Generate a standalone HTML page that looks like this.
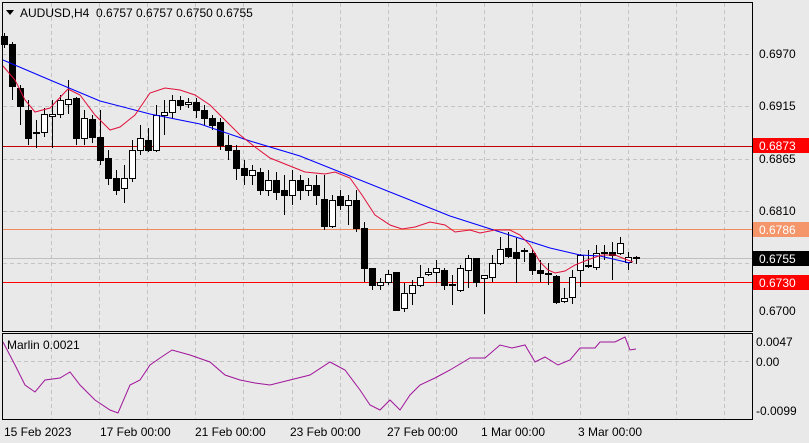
<!DOCTYPE html>
<html><head><style>
html,body{margin:0;padding:0;background:#e9e9e9;}
svg{display:block;font-family:"Liberation Sans",sans-serif;}
</style></head><body>
<svg id="s" width="809" height="443" viewBox="0 0 809 443" xmlns="http://www.w3.org/2000/svg">
<rect x="0" y="0" width="809" height="443" fill="#e9e9e9"/>
<g id="grid" stroke="#c4c4c4" stroke-dasharray="4,3" stroke-width="1"></g>
<line x1="2" y1="146.5" x2="752" y2="146.5" stroke="#c00000"/>
<line x1="2" y1="229.5" x2="752" y2="229.5" stroke="#f08a60"/>
<line x1="2" y1="258.5" x2="752" y2="258.5" stroke="#c0c0c0"/>
<line x1="2" y1="282.5" x2="752" y2="282.5" stroke="#ff0000"/>
<g id="candles"></g>
<polyline fill="none" stroke="#0000ff" stroke-width="1" points="3,60 50,80 100,101 150,114 200,124 250,141 300,156 350,176 400,196 450,216 500,232 550,248 580,255 600,256 630,263"/>
<polyline fill="none" stroke="#e0103a" stroke-width="1" points="3,66 15,80 25,100 35,112 50,108 68,89 80,95 95,115 110,130 120,127 135,115 150,93 165,88 180,90 195,95 210,105 225,120 240,135 255,147 270,158 290,166 305,172 325,174 335,172 350,178 362,195 375,215 390,225 402,229 415,227 430,222 445,225 455,232 470,230 480,233 495,230 510,230 520,235 530,245 540,262 548,270 555,273 565,271 575,265 590,259 602,255 615,255 625,259 633,262"/>
<polyline fill="none" stroke="#a0149a" stroke-width="1" points="3,342 15,365 25,385 35,392 45,380 60,378 70,372 80,385 95,400 110,410 118,413 130,385 140,380 150,365 160,358 172,350 190,355 210,362 225,375 240,380 255,383 270,385 290,380 310,375 330,362 345,370 360,390 370,405 380,410 390,400 400,410 410,395 420,385 435,378 450,370 470,358 485,358 500,345 512,348 525,345 535,362 545,357 558,365 570,360 580,348 595,348 600,342 615,342 625,337 630,350 636,349"/>
<rect x="2.5" y="2.5" width="750" height="329" fill="none" stroke="#000"/>
<rect x="2.5" y="333.5" width="750" height="86" fill="none" stroke="#000"/>
<polygon points="6,10 14,10 10,15" fill="#000"/>
<text x="20" y="17" font-size="12" fill="#000">AUDUSD,H4&#160;&#160;0.6757 0.6757 0.6750 0.6755</text>
<text x="7" y="349" font-size="12" fill="#000">Marlin 0.0021</text>
<g font-size="12" fill="#000" id="axis">
<text x="759" y="58">0.6970</text>
<text x="759" y="110">0.6915</text>
<text x="759" y="163">0.6865</text>
<text x="759" y="215">0.6810</text>
<text x="759" y="315">0.6700</text>
<text x="756" y="346">0.0047</text>
<text x="756" y="366">0.00</text>
<text x="756" y="415">-0.0099</text>
</g>
<rect x="753" y="138" width="56" height="15" fill="#ff0000"/>
<text x="759" y="150" font-size="12" fill="#fff">0.6873</text>
<rect x="753" y="222" width="56" height="15" fill="#f4956a"/>
<text x="759" y="234" font-size="12" fill="#fff">0.6786</text>
<rect x="753" y="251" width="56" height="15" fill="#000"/>
<text x="759" y="263" font-size="12" fill="#fff">0.6755</text>
<rect x="753" y="275" width="56" height="15" fill="#ff0000"/>
<text x="759" y="287" font-size="12" fill="#fff">0.6730</text>
<g font-size="12" fill="#000">
<text x="4" y="436">15 Feb 2023</text>
<text x="100" y="436">17 Feb 00:00</text>
<text x="195" y="436">21 Feb 00:00</text>
<text x="290" y="436">23 Feb 00:00</text>
<text x="387" y="436">27 Feb 00:00</text>
<text x="481" y="436">1 Mar 00:00</text>
<text x="578" y="436">3 Mar 00:00</text>
</g>
</svg>
<script>
var NS="http://www.w3.org/2000/svg";
function el(t,a,p){var e=document.createElementNS(NS,t);for(var k in a)e.setAttribute(k,a[k]);p.appendChild(e);return e;}
var g=document.getElementById('grid');
for(var i=0;i<15;i++){var x=51+48.1*i;if(x>750)break;x=Math.round(x)+.5;el('line',{x1:x,y1:3,x2:x,y2:331},g);el('line',{x1:x,y1:334,x2:x,y2:419},g);}
[54,106,159,211,263].forEach(function(y){el('line',{x1:3,y1:y+.5,x2:752,y2:y+.5},g);});
el('line',{x1:3,y1:361.5,x2:752,y2:361.5},g);
var d=[[36,44,33,48],[44,86,42,100],[88,106,85,125],[110,138,100,145],[132,133,120,148],[132,114,108,137],[116,114,100,148],[114,100,95,118],[104,99,80,114],[98,138,97,145],[138,118,110,145],[119,137,115,143],[137,160,110,165],[158,178,150,185],[178,190,170,195],[188,178,165,203],[178,150,140,182],[150,138,125,155],[140,150,128,152],[150,115,105,152],[115,112,100,135],[112,100,95,118],[100,105,96,110],[104,102,98,108],[102,110,98,118],[110,118,105,125],[118,125,115,130],[122,145,118,150],[145,150,135,160],[150,168,145,180],[168,175,160,185],[175,170,165,185],[172,190,168,195],[190,180,170,196],[180,192,172,200],[190,195,175,215],[195,180,170,205],[180,190,175,200],[190,185,178,196],[185,195,175,205],[199,226,175,230],[226,200,195,228],[196,205,190,210],[205,200,195,225],[200,228,190,232],[228,268,222,282],[268,285,268,290],[285,282,278,290],[282,274,270,285],[272,310,272,310],[308,293,283,312],[293,285,280,305],[285,277,265,287],[274,272,268,276],[272,268,260,283],[270,285,268,290],[285,284,275,305],[290,268,265,292],[270,258,255,288],[258,282,258,287],[278,275,275,314],[277,263,255,282],[263,249,237,265],[248,256,232,258],[252,258,238,283],[250,251,248,262],[253,270,249,275],[270,273,260,282],[273,274,263,285],[276,302,275,304],[301,298,288,303],[297,277,270,304],[270,255,254,287],[265,266,250,268],[267,253,245,270],[253,252,245,260],[252,255,242,280],[253,243,237,255],[262,257,252,270],[257,258,256,264]];
var cg=document.getElementById('candles');
d.forEach(function(c,i){var x=4+8*i;var o=c[0],cl=c[1],h=c[2],l=c[3];var top=Math.min(o,cl),bot=Math.max(o,cl);if(bot-top<1)bot=top+1;
el('line',{x1:x+.5,y1:h,x2:x+.5,y2:l,stroke:'#000'},cg);
var bull=cl<o;el('rect',{x:x-2.5,y:top+.5,width:6,height:bot-top,fill:bull?'#fff':'#000',stroke:'#000'},cg);});
</script>
</body></html>
